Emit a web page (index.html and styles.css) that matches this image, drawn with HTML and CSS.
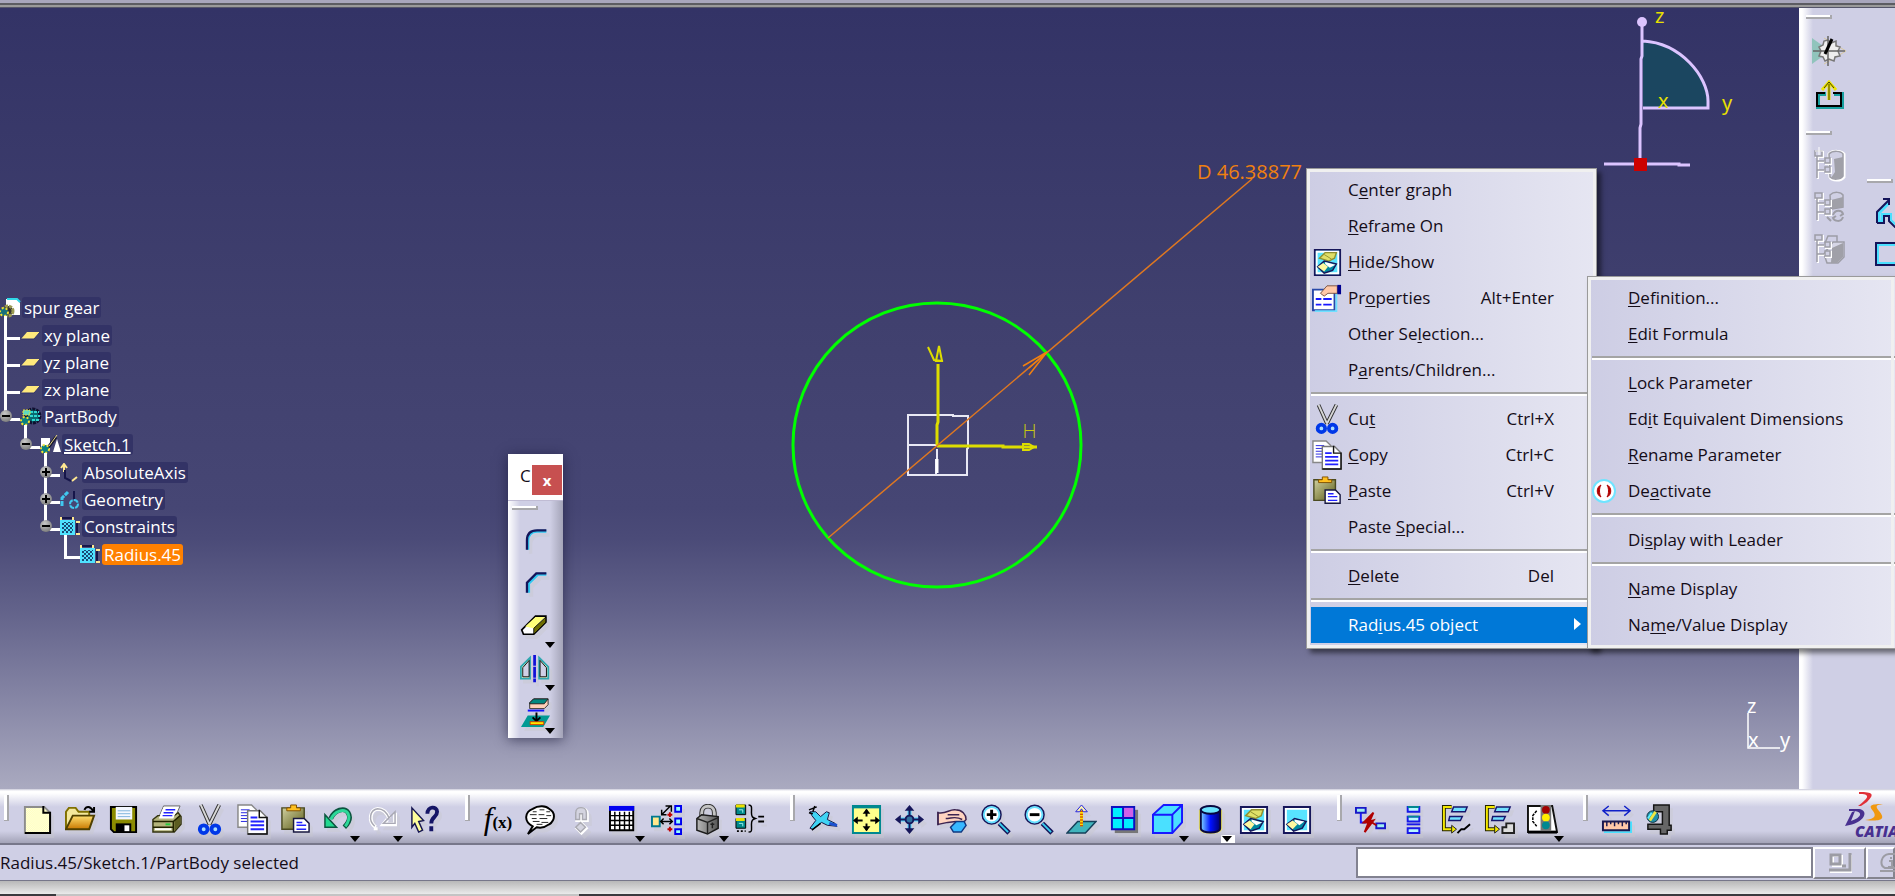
FILE: index.html
```html
<!DOCTYPE html>
<html lang="en">
<head>
<meta charset="utf-8">
<title>CATIA - spur gear</title>
<link rel="stylesheet" href="styles.css">
</head>
<body>
<svg class="defs" aria-hidden="true">
  <defs>
    <pattern id="dots" width="2" height="2" patternUnits="userSpaceOnUse"><rect width="2" height="2" fill="#fff"/><rect width="1" height="1" fill="#ffff99"/><rect x="1" y="1" width="1" height="1" fill="#ffff99"/></pattern>
    <pattern id="check" width="4" height="4" patternUnits="userSpaceOnUse"><rect width="4" height="4" fill="#4fe3ff"/><rect width="2" height="2" fill="#1a4a76"/><rect x="2" y="2" width="2" height="2" fill="#1a4a76"/></pattern>
    <linearGradient id="olive" x1="0" y1="0" x2="1" y2="1"><stop offset="0" stop-color="#d0d0a0"/><stop offset="1" stop-color="#5c5c18"/></linearGradient>
    <linearGradient id="gold" x1="0" y1="0" x2="0" y2="1"><stop offset="0" stop-color="#ffe070"/><stop offset="1" stop-color="#c87800"/></linearGradient>
    <linearGradient id="tube" x1="0" x2="1"><stop offset="0" stop-color="#7fd8ff"/><stop offset=".5" stop-color="#0010ff"/><stop offset="1" stop-color="#000070"/></linearGradient>
    <linearGradient id="steel" x1="0" x2="1"><stop offset="0" stop-color="#b8b8b8"/><stop offset="1" stop-color="#555"/></linearGradient>
    <symbol id="i-new" viewBox="0 0 32 32"><path d="M3 3h20l6 6v21H3z" fill="url(#dots)" stroke="#8c8c8c" stroke-width="2"/><path d="M22 2v7h7v21H3" fill="none" stroke="#000" stroke-width="2"/></symbol>
    <symbol id="i-open" viewBox="0 0 32 32"><path d="M1 26V8l3-4h7l3 4h11v4" fill="#f4e89c" stroke="#807000" stroke-width="2"/><path d="M1 26L8 12h22l-5 14z" fill="url(#gold)" stroke="#504000" stroke-width="2"/><path d="M20 6c2-4 6-4 9 1M30 3v5h-5" fill="none" stroke="#000" stroke-width="2"/></symbol>
    <symbol id="i-save" viewBox="0 0 32 32"><path d="M3 3h26v26H6l-3-3z" fill="#8b8b00" stroke="#000" stroke-width="2"/><path d="M8 3h17v13H8z" fill="#f4f8ff"/><path d="M10 7h13M10 10h13M10 13h13" stroke="#7fb4dc"/><path d="M8 20h16v9H8z" fill="#000"/><path d="M17 22h5v6h-5z" fill="#fff"/></symbol>
    <symbol id="i-print" viewBox="0 0 32 32"><path d="M13 2h17l-6 14H7z" fill="#fff" stroke="#666"/><path d="M15 5h11M13 8h11M12 11h11" stroke="#2222ff" stroke-width="1.500"/><path d="M2 16l5-4h17l4-3 3 4v8l-7 8H2z" fill="#b4b47c" stroke="#333310" stroke-width="1.500"/><path d="M24 17l6-5v9l-6 7z" fill="#5c5c20"/><path d="M2 18h21l7-6M2 24h21M23 18v11" fill="none" stroke="#222200" stroke-width="1.500"/><path d="M4 26h17" stroke="#fff" stroke-width="2"/><path d="M15 21h5" stroke="#28c840" stroke-width="2"/><path d="M8 15L13 3h15l-5 12z" fill="#fff"/><path d="M15 6h10M13 9h10M12 12h10" stroke="#2222ff" stroke-width="1.500"/></symbol>
    <symbol id="i-cut" viewBox="0 0 32 32"><path d="M7 1l9 20M26 1L16 21" stroke="#333" stroke-width="4"/><path d="M7 1l9 20M26 1L16 21" stroke="#d8d8d8" stroke-width="2"/><circle cx="10" cy="26" r="4" fill="#aaddff" stroke="#0038e8" stroke-width="4"/><circle cx="22" cy="26" r="4" fill="#aaddff" stroke="#0038e8" stroke-width="4"/></symbol>
    <symbol id="i-copy" viewBox="0 0 32 32"><path d="M1 1h14l5 5v18H1z" fill="#fff" stroke="#888" stroke-width="1.500"/><path d="M4 6h9M4 9h9M4 12h7M4 15h7M4 18h7" stroke="#2222e0"/><path d="M11 7h13l7 7v17H11z" fill="#fff" stroke="#777" stroke-width="1.500"/><path d="M23 6v8h8v17H11" fill="none" stroke="#111" stroke-width="1.500"/><path d="M14 14h7M14 18h14M14 22h14M14 26h14" stroke="#2222ff" stroke-width="2"/></symbol>
    <symbol id="i-paste" viewBox="0 0 32 32"><path d="M2 4h23v22H2z" fill="url(#olive)" stroke="#4a4a20" stroke-width="1.500"/><path d="M7 7V4h4V1h6v3h4v3z" fill="#ffc020" stroke="#805000"/><path d="M14 15h11l5 5v9H14z" fill="#fff" stroke="#181840" stroke-width="1.500"/><path d="M17 19h6M17 22h10M17 26h10" stroke="#2222ff" stroke-width="1.500"/></symbol>
    <symbol id="i-undo" viewBox="0 0 32 32"><path d="M8 15C12 6 22 3 26 9c3 5 1 10-4 15" fill="none" stroke="#0c5540" stroke-width="5"/><path d="M2 11v13h12z" fill="#22d890" stroke="#0c5540" stroke-width="1.500"/><path d="M8 16C12 7 22 4 26 10c2 5 0 9-3 13" fill="none" stroke="#2cd898" stroke-width="3"/></symbol>
    <symbol id="i-redo" viewBox="0 0 32 32"><path d="M10 24C2 18 4 6 12 5c6 0 10 5 12 10M30 9v12H18l4-5M10 24v3" fill="none" stroke="#fff" stroke-width="4"/><path d="M9 23C2 17 4 6 12 5c6 0 10 5 12 10M30 8v12H18z" fill="none" stroke="#a9a9b4" stroke-width="1.500"/></symbol>
    <symbol id="i-help" viewBox="0 0 32 32"><path d="M3 4l12 13-5 1 4 9-4 2-4-9-3 4z" fill="#ffff9c" stroke="#151550" stroke-width="1.500"/><path d="M19 10c0-8 10-8 10-2 0 6-6 5-6 12M23 23v5" fill="none" stroke="#151566" stroke-width="4"/></symbol>
    <symbol id="i-speech" viewBox="0 0 32 32"><path d="M8 23C-2 18 0 8 8 5 14 1 22 2 25 5c7 4 6 12 0 16-4 3-9 4-13 3l-9 7z" fill="#fff" stroke="#000" stroke-width="2"/><path d="M8 8h4M15 6h5M22 8h4M5 11h7M14 11h6M22 12h5M7 15h5M15 15h8M8 18h7M17 19h7M12 21h6" stroke="#222"/></symbol>
    <symbol id="i-clip" viewBox="0 0 32 32"><path d="M9 16V9c0-7 11-7 11 0v7h-4v-6h-3v6zM14 19l5 5-5 5-5-5z" fill="none" stroke="#fff" stroke-width="3" transform="translate(1 1)"/><path d="M9 16V9c0-7 11-7 11 0v7h-4v-6h-3v6zM14 19l5 5-5 5-5-5z" fill="#d4d4e0" stroke="#aaaab2" stroke-width="1.500"/></symbol>
    <symbol id="i-table" viewBox="0 0 32 32"><path d="M1 3h24v24H1z" fill="#fff" stroke="#000" stroke-width="2"/><path d="M6 8v19M11 8v19M16 8v19M21 8v19M1 12h24M1 17h24M1 22h24" stroke="#000" stroke-width="1.5"/><path d="M0 2h26v5H0z" fill="#0000f0"/></symbol>
    <symbol id="i-rel" viewBox="0 0 32 32"><path d="M1 13h8v10H1z" fill="#ffe88c" stroke="#007890" stroke-width="2"/><path d="M10 18h12M11 11l9-9M15 2h6v6M11 6v5h5M13 15l-3 3 3 3M19 15l3 3-3 3" fill="none" stroke="#000" stroke-width="1.5"/><path d="M17 11h5M19.500 8.500v5M17 26h5M19.500 23.500v5" stroke="#c00000" stroke-width="2"/><path d="M25 2h6v6h-6zM25 15h6v6h-6zM25 26h6v5h-6z" fill="#9ff" stroke="#0000f0" stroke-width="2"/></symbol>
    <symbol id="i-lock" viewBox="0 0 32 32"><path d="M9 18V9c0-9 13-9 13 0v7" fill="none" stroke="#333" stroke-width="5"/><path d="M9 18V9c0-9 13-9 13 0v7" fill="none" stroke="#c4c4c4" stroke-width="3"/><path d="M4 15l5-4 17 2v12l-11 6-11-4z" fill="url(#steel)" stroke="#1a1a1a" stroke-width="1.500"/><path d="M15 19v12M15 19l11-5M4 15l11 4M20 19v6M18 21h4" fill="none" stroke="#222" stroke-width="1.500"/></symbol>
    <symbol id="i-eq" viewBox="0 0 32 32"><path d="M1 1h10v10H1zM1 15h10v10H1z" fill="#008888" stroke="#000"/><path d="M1 2h9M1 16h9" stroke="#e8e000" stroke-width="3"/><path d="M4 6h4v3M4 20h4v3" fill="none" stroke="#9cf0f0"/><path d="M14 1c4 0 3 3 3 8 0 4 1 5 4 6-3 1-4 2-4 6 0 6 1 8-3 8" fill="none" stroke="#000" stroke-width="1.5"/><path d="M24 13h6M24 18h6M2 28h2M6 28h2M10 28h1" stroke="#000" stroke-width="2"/></symbol>
    <symbol id="i-fly" viewBox="0 0 32 32"><path d="M2 8l6 0 5 5 6-5 3 1-2 7 8 4 2 3-10-1-6-3-9 7-3-1 6-8-4-5z" fill="#40d4f4" stroke="#151540"/><path d="M1 6l8-3M5 8l2-6M4 27l9-7M1 9l4 1" stroke="#000" stroke-width="1.500"/><path d="M22 20l8 2" stroke="#1b50d0" stroke-width="3"/></symbol>
    <symbol id="i-fit" viewBox="0 0 32 32"><path d="M2 2h28v28H2z" fill="#ffff8c" stroke="#008890" stroke-width="2"/><path d="M1 3h30" stroke="#008890" stroke-width="3"/><path d="M16 6v7M16 20v7M4 17h8M20 17h8" stroke="#000" stroke-width="2"/><path d="M12 10h8l-4-5zM12 23h8l-4 5zM7 13v8l-5-4zM25 13v8l5-4z"/></symbol>
    <symbol id="i-pan" viewBox="0 0 32 32"><path d="M16 4v24M4 16h24" stroke="#48d4ff" stroke-width="4"/><path d="M16 4v24M4 16h24" stroke="#16165a" stroke-width="2"/><path d="M11 7h10l-5-6zM11 25h10l-5 6zM7 11v10l-6-5zM25 11v10l6-5z" fill="#16165a"/><circle cx="16" cy="16" r="4" fill="#3070a0" stroke="#16165a" stroke-width="2"/></symbol>
    <symbol id="i-rot" viewBox="0 0 32 32"><path d="M1 9c8 2 12-4 18-3 7 0 11 5 11 10l-5 6-6-4-8 1-10 2z" fill="#ffd4c0" stroke="#3c2450" stroke-width="1.500"/><path d="M11 11h12M9 15c6 0 10-3 17 1M1 8v14" fill="none" stroke="#3c2450" stroke-width="1.500"/><path d="M14 24l6-6h8l2 4-5 7h-8z" fill="#38b8ff" stroke="#103880" stroke-width="1.500"/></symbol>
    <symbol id="i-zin" viewBox="0 0 32 32"><path d="M20 20l10 10" stroke="#16165a" stroke-width="5"/><path d="M20 20l9 9" stroke="#38d0f0" stroke-width="2"/><circle cx="12" cy="11" r="9.500" fill="#fff" stroke="#16165a" stroke-width="2"/><circle cx="12" cy="11" r="8" fill="none" stroke="#66e0ff" stroke-width="2"/><path d="M7 11h10M12 6v10" stroke="#000" stroke-width="3"/></symbol>
    <symbol id="i-zout" viewBox="0 0 32 32"><path d="M20 20l10 10" stroke="#16165a" stroke-width="5"/><path d="M20 20l9 9" stroke="#38d0f0" stroke-width="2"/><circle cx="12" cy="11" r="9.500" fill="#fff" stroke="#16165a" stroke-width="2"/><circle cx="12" cy="11" r="8" fill="none" stroke="#66e0ff" stroke-width="2"/><path d="M7 11h10" stroke="#000" stroke-width="3"/></symbol>
    <symbol id="i-normal" viewBox="0 0 32 32"><path d="M12 18h19L20 30H1z" fill="#40b4bc" stroke="#16405a" stroke-width="1.500"/><path d="M16 23V4" stroke="#ffe000" stroke-width="3"/><path d="M16 23V4" stroke="#c02000" stroke-width="3" stroke-dasharray="1 2"/><path d="M16 1l-6 7h4l2-3 2 3h4z" fill="#fff6b0" stroke="#2020e0"/></symbol>
    <symbol id="i-views" viewBox="0 0 32 32"><path d="M6 6h24v24H6z" fill="#777"/><path d="M3 3h23v23H3z" fill="#00f0ff" stroke="#1010c0" stroke-width="2"/><path d="M15 4h10v10H15z" fill="#d060e8"/><path d="M14.500 3v23M3 14.500h23" stroke="#1010c0" stroke-width="2"/></symbol>
    <symbol id="i-cube" viewBox="0 0 32 32"><path d="M1 11L12 1h19v18L21 30H1z" fill="#4ae0ff" stroke="#1818ff" stroke-width="2"/><path d="M1 11h20v19M21 11L31 1" fill="none" stroke="#1818ff" stroke-width="2"/></symbol>
    <symbol id="i-cyl" viewBox="0 0 32 32"><path d="M5 6v20c2 5 20 5 22 0V6" fill="none" stroke="#f0e860" stroke-width="2"/><path d="M6 6v19c0 6 20 6 20 0V6z" fill="url(#tube)" stroke="#080840" stroke-width="2"/><ellipse cx="16" cy="6" rx="10" ry="4" fill="#6ce4ff" stroke="#080840" stroke-width="2"/></symbol>
    <symbol id="i-hide" viewBox="0 0 32 32"><path d="M3 3h27v27H3z" fill="#58e4ff" stroke="#16165a" stroke-width="2"/><path d="M5 5h23v23H5z" fill="none" stroke="#fff" stroke-width="2"/><path d="M8 12l6-6h12l-2 6-6 3z" fill="#e0e068" stroke="#909030" stroke-width="1.500"/><path d="M13 8l8 5" stroke="#909030"/><path d="M6 21l7-6 13 3-4 7-9 3z" fill="#0088a0" stroke="#16165a" stroke-width="1.500"/><path d="M6 21l6-4 5 4-4 5z" fill="#fff8a0"/><path d="M14 16l11 3-6 3-5-4z" fill="#fff"/></symbol>
    <symbol id="i-swap" viewBox="0 0 32 32"><path d="M3 3h27v27H3z" fill="#58e4ff" stroke="#16165a" stroke-width="2"/><path d="M5 5h23v23H5z" fill="none" stroke="#fff" stroke-width="2"/><path d="M6 21l8-6 12 3-4 7-9 3z" fill="#0088a0" stroke="#16165a" stroke-width="1.500"/><path d="M6 21l6-4 5 4-5 5z" fill="#fff8a0"/><path d="M14 16l10 2-5 4-5-4z" fill="#fff"/></symbol>
    <symbol id="i-bolt" viewBox="0 0 32 32"><path d="M6 9v10h5" fill="none" stroke="#1818ff" stroke-width="2"/><path d="M1 4h10v5H1zM22 20h9v5h-9z" fill="#a0f0f0" stroke="#1818c8" stroke-width="2"/><path d="M19 9L9 19h5l-4 10 9-12-4 1z" fill="#b00000" stroke="#b00000" stroke-width="2"/><path d="M16 18l6 4" stroke="#b00000" stroke-width="2"/></symbol>
    <symbol id="i-stack" viewBox="0 0 32 32"><path d="M10 3h12v5H10zM10 13h12v5H10zM10 25h12v5H10z" fill="#b8f8ff" stroke="#1818e8" stroke-width="2"/><path d="M9 21h14" stroke="#1818e8" stroke-width="2"/><path d="M10 3h12M10 13h12" stroke="#008890" stroke-width="2"/></symbol>
    <symbol id="i-tree1" viewBox="0 0 32 32"><path d="M11 3H3v23h10" fill="none" stroke="#222200" stroke-width="4"/><path d="M11 3H3v23h10" fill="none" stroke="#f4e800" stroke-width="2"/><path d="M11 22v8l5-4z" fill="#f4e800" stroke="#222"/><path d="M13 3h14l-2 5H11zM9 13h13l-2 4H8z" fill="#70e0ff" stroke="#16166c" stroke-width="1.500"/><path d="M17 30l4-4h3l6-5" stroke="#000" fill="none" stroke-width="2"/></symbol>
    <symbol id="i-tree2" viewBox="0 0 32 32"><path d="M11 3H3v23h10" fill="none" stroke="#222200" stroke-width="4"/><path d="M11 3H3v23h10" fill="none" stroke="#f4e800" stroke-width="2"/><path d="M11 22v8l5-4z" fill="#f4e800" stroke="#222"/><path d="M13 3h14l-2 5H11zM9 13h13l-2 4H8z" fill="#70e0ff" stroke="#16166c" stroke-width="1.500"/><path d="M19 30v-6h4v-4h8v10z" stroke="#222" fill="#ddd" stroke-width="2"/></symbol>
    <symbol id="i-light" viewBox="0 0 32 32"><path d="M1 2h25l5 27H1z" fill="#fff" stroke="#111" stroke-width="2"/><path d="M1 29h30" stroke="#000" stroke-width="3"/><path d="M14 1h11v27H14z" fill="#777"/><circle cx="19.500" cy="6" r="4" fill="#a00000"/><circle cx="19.500" cy="14" r="4" fill="#ffee00"/><circle cx="19.500" cy="22" r="4" fill="#008890"/><path d="M10 7l-4 5v6l4 5" fill="none" stroke="#000" stroke-width="1.500" stroke-dasharray="3 1"/></symbol>
    <symbol id="i-ruler" viewBox="0 0 32 32"><path d="M2 7h28M8 2L2 7l6 5M24 2l6 5-6 5" fill="none" stroke="#1020c8" stroke-width="1.500"/><path d="M3 29h28V18" fill="none" stroke="#4ae0ff" stroke-width="2"/><path d="M2 18h27v9H2z" fill="#ffc8a8" stroke="#181850" stroke-width="2"/><path d="M6 18v5M10 18v3M14 18v5M18 18v3M22 18v5M26 18v3" stroke="#181850" stroke-width="1.500"/></symbol>
    <symbol id="i-caliper" viewBox="0 0 32 32"><path d="M10 1h16v21h2v5h-4v4h-7v-5H4v-5h15V8h-9z" fill="#666" stroke="#151515" stroke-width="1.500"/><circle cx="9" cy="13" r="6" fill="#2090a8" stroke="#103040"/><path d="M6 17l6-9" stroke="#f0e840" stroke-width="3"/><path d="M4 15l4-6" stroke="#60f0ff" stroke-width="2"/></symbol>
    <symbol id="i-props" viewBox="0 0 32 32"><path d="M1 7h23v22H1z" fill="#fff" stroke="#2848a8" stroke-width="2"/><path d="M26 8v22H3" fill="none" stroke="#70e0ff" stroke-width="2"/><path d="M4 17h6M12 17h9M4 23h6M12 23h9" stroke="#1818ff" stroke-width="2"/><path d="M9 11l7-8h11v8H17l-4 3z" fill="#ffc8a8" stroke="#775040"/><path d="M27 2h4v10h-4z" fill="#000090"/></symbol>
    <symbol id="i-corner" viewBox="-3 -2 40 40"><path d="M7 30V19c0-9 5-13 12-13h12" fill="none" stroke="#30c8f0" stroke-width="4"/><path d="M6 30V18C6 9 11 5 19 5h12" fill="none" stroke="#15155a" stroke-width="3"/></symbol>
    <symbol id="i-chamfer" viewBox="-3 -2 40 40"><path d="M8 30V18L20 6h11" fill="none" stroke="#30c8f0" stroke-width="4"/><path d="M6 30V17L18 5h13" fill="none" stroke="#15155a" stroke-width="3"/></symbol>
    <symbol id="i-eraser" viewBox="0 -2 36 36"><path d="M2 20L18 4h12v7L16 25H4z" fill="#fff" stroke="#000" stroke-width="2"/><path d="M6 16L18 5h11L16 18z" fill="#ffff78"/><path d="M16 18L30 5v6L16 25z" fill="#6c6c00" stroke="#000"/></symbol>
    <symbol id="i-mirror" viewBox="0 0 34 34"><path d="M1 14L11 4v23H1z" fill="#fffccc" stroke="#30a8b0" stroke-width="2"/><path d="M3 15l7-8v18H3z" fill="#d0d0e6" stroke="#000"/><path d="M21 4l10 10v13H21z" fill="#fffccc" stroke="#30a8b0" stroke-width="2"/><path d="M22 7l7 8v10h-7z" fill="#d0d0e6" stroke="#000"/><path d="M16 1v30" stroke="#1010d8" stroke-width="3" stroke-dasharray="12 1"/></symbol>
    <symbol id="i-project" viewBox="0 0 32 32"><path d="M8 19h23l-7 12H1z" fill="#009a94"/><path d="M10 6l4-4h15v6l-4 4H10z" fill="#ffd0b8" stroke="#333"/><path d="M10 6l4-4h15l-4 5H10z" fill="#008880" stroke="#222"/><path d="M8 14h17" stroke="#1010ff" stroke-width="2"/><path d="M17 16v8M13 21l4 4 4-4" fill="none" stroke="#000" stroke-width="2"/><path d="M10 27h15" stroke="#d04000" stroke-width="4"/><path d="M11 27h13" stroke="#ffe800" stroke-width="2"/></symbol>
    <symbol id="i-sketcher" viewBox="0 0 36 32"><path d="M0 3l18 13L0 29z" fill="#90c4bc"/><path d="M12 3l22 13-22 13" fill="none" stroke="#d8c8a0"/><path d="M16 5l3 3 5-2v5l4 1-2 4 2 5-5 1-1 4-5-2-4 2-2-4-4-1 2-5-2-4 4-2 1-4z" fill="#eee" stroke="#777" stroke-width="1.500"/><path d="M16 1v30M1 16h32" stroke="#666" stroke-width="1.500"/><path d="M13 19l7-15" stroke="#000" stroke-width="3"/></symbol>
    <symbol id="i-exit" viewBox="0 0 36 32"><path d="M14 14H6v13h24V14h-8" fill="none" stroke="#18a0a0" stroke-width="4"/><path d="M13 13H5v13h24V13h-8" fill="none" stroke="#000" stroke-width="2"/><path d="M17 20V4M10 10l7-8 7 8" fill="none" stroke="#ece400" stroke-width="3"/><path d="M17 20V4M12 8l5-6 5 6" fill="none" stroke="#443c00" stroke-width="1"/></symbol>
    <symbol id="g-list" viewBox="0 0 36 36"><path d="M3 4h7v5H3zM13 11h5v5h-5zM13 20h5v5h-5zM5 9v22M5 14h7M5 23h7" fill="none" stroke="#fff" stroke-width="2" transform="translate(1 1)"/><path d="M3 4h7v5H3zM13 11h5v5h-5zM13 20h5v5h-5zM5 9v22M5 14h7M5 23h7" fill="#d0d0e4" stroke="#9d9da6" stroke-width="1.500"/></symbol>
    <symbol id="i-d1" viewBox="0 0 36 36"><path d="M17 7c4-4 13-3 15 0v23c-3 4-12 4-14 0z" fill="#d0d0e4" stroke="#fff" stroke-width="3"/><path d="M17 7c4-4 12-3 14 0v22c-3 4-10 4-13 1z" fill="#d0d0e4" stroke="#9d9da6" stroke-width="1.500"/><path d="M22 12l9-2v19c-2 3-8 4-12 2l4-6z" fill="#a0a0a8"/><use href="#g-list" width="36" height="36"/><path d="M7 0v8M3 4h8" stroke="#fff"/></symbol>
    <symbol id="i-d2" viewBox="0 0 36 36"><path d="M18 6c4-4 11-3 13 0v12l-12 2z" fill="#d0d0e4" stroke="#9d9da6" stroke-width="1.500"/><path d="M19 11l12-3v10l-11 2z" fill="#a0a0a8"/><use href="#g-list" width="36" height="36"/><path d="M21 26c2-6 9-5 10-1l-3 2M31 28c-2 6-9 4-10 1l3-2M15 28l4 4" fill="none" stroke="#9d9da6" stroke-width="2"/></symbol>
    <symbol id="i-d3" viewBox="0 0 36 36"><path d="M17 16l4-5h11v15l-6 6H15l-3-9z" fill="#d6d6e6" stroke="#9d9da6" stroke-width="1.500"/><path d="M20 17l11-5v14l-6 6h-6z" fill="#a0a0a8"/><use href="#g-list" width="36" height="36"/><path d="M13 12l3-7h9v6" fill="none" stroke="#9d9da6" stroke-width="1.500"/></symbol>
    <symbol id="i-profile" viewBox="0 0 36 32"><path d="M4 25V16L14 6" fill="none" stroke="#4ae0ff" stroke-width="3"/><path d="M2 26V15L14 3M8 2h6v6M2 26h7v-7h5v5l6 6h8V12" fill="none" stroke="#15155a" stroke-width="2"/><path d="M4 24h3v-7h9v6l5 5" fill="none" stroke="#4ae0ff" stroke-width="2"/></symbol>
    <symbol id="i-rect" viewBox="0 0 36 32"><path d="M1 4h34v22H1z" fill="#d0d0e6" stroke="#15155a" stroke-width="2"/><path d="M3 6h31v18H3z" fill="none" stroke="#4ae0ff" stroke-width="2"/></symbol>
    <symbol id="i-off" viewBox="0 0 24 24"><circle cx="12" cy="12" r="11" fill="#fff" stroke="#70e4ff" stroke-width="2"/><path d="M9 6c-5 2-5 10 0 12-2-3-2-9 0-12zM15 6c5 2 5 10 0 12 2-3 2-9 0-12z" fill="#b00000" stroke="#b00000" stroke-width="1"/></symbol>
    <symbol id="t-part" viewBox="0 0 22 20"><path d="M6 1h11l3 4v12H6z" fill="#fff"/><path d="M7 1h10l3 3" fill="none" stroke="#30d8e8" stroke-width="2"/><circle cx="8" cy="13" r="5" fill="#333" stroke="#9a9a50" stroke-width="3" stroke-dasharray="3 1"/><circle cx="4" cy="14" r="4" fill="#18707c" stroke="#f0e030" stroke-width="2" stroke-dasharray="2 2"/></symbol>
    <symbol id="t-plane" viewBox="0 0 22 20"><path d="M7 6h13l-6 7H1z" fill="#ffe97c"/><path d="M1 13h13l6-7" fill="none" stroke="#30306a" stroke-width="1"/></symbol>
    <symbol id="t-body" viewBox="0 0 22 20"><circle cx="13" cy="9" r="7" fill="#0a6a70" stroke="#101030" stroke-width="3" stroke-dasharray="3 1"/><path d="M10 5h9M10 9h10M12 13h8" stroke="#30d8d0" stroke-width="2" stroke-dasharray="3 1"/><circle cx="5" cy="14" r="4" fill="#0a8080" stroke="#f0e030" stroke-width="2" stroke-dasharray="2 2"/><path d="M3 3h7v5H3z" fill="#60d8c0" stroke="#f0e030" stroke-dasharray="2 1"/></symbol>
    <symbol id="t-sketch" viewBox="0 0 22 20"><path d="M1 3h9v12H1zM13 17l4-13 4 13z" fill="#fff"/><path d="M7 14l9-12" stroke="#181830" stroke-width="3"/><path d="M9 11l8-11" stroke="#e8d880" stroke-width="1"/><circle cx="5" cy="14" r="4" fill="#0a8080" stroke="#f0e030" stroke-width="2" stroke-dasharray="2 2"/></symbol>
    <symbol id="t-axis" viewBox="0 0 22 20"><path d="M4 9V2M1 5l3-4 3 4M12 18l5-4" fill="none" stroke="#ffe890" stroke-width="2"/><path d="M5 7v8l6 3" fill="none" stroke="#16164a" stroke-width="2"/></symbol>
    <symbol id="t-geo" viewBox="0 0 22 20"><path d="M2 16V8l6-6" fill="none" stroke="#40c8f0" stroke-width="3" stroke-dasharray="5 1"/><path d="M14 1v9" stroke="#16164a" stroke-width="2"/><circle cx="14" cy="14" r="4" fill="none" stroke="#40c8f0" stroke-width="2" stroke-dasharray="5 1"/></symbol>
    <symbol id="t-con" viewBox="0 0 22 20"><path d="M1 4h13v13H1z" fill="url(#check)" stroke="#4fe3ff" stroke-width="2"/><path d="M1 1h13M17 4v13" stroke="#16164a" stroke-width="2"/><path d="M1 0v3M13 0v3M16 5h4M16 17h4" stroke="#ffe890" stroke-width="2"/></symbol>
    <symbol id="b-win" viewBox="0 0 24 20"><path d="M4 2h9v10H4zM1 18h22V1" fill="none" stroke="#fff" stroke-width="2" transform="translate(1 1)"/><path d="M3 2h9v9H3zM1 17h21V0M14 13h4" fill="none" stroke="#9c9ca4" stroke-width="3"/></symbol>
    <symbol id="b-info" viewBox="0 0 24 20"><path d="M6 15C0 12 2 2 10 1h8c8 2 8 12 0 14zM1 18h22" fill="none" stroke="#9c9ca4" stroke-width="2"/><path d="M12 4v2M10 8h3v6M9 14h6" fill="none" stroke="#9c9ca4" stroke-width="2"/></symbol>
  </defs>
</svg>

<div class="app">
  <div class="window-edge"></div>

  <main class="workspace">
    <section class="viewport">
      <svg class="scene" viewBox="0 8 1799 781">
        <g fill="none" stroke="#e8e8f4" stroke-width="2">
          <path d="M908 415h45v1h15v32l-1 1v26h-59zM908 445h29M937 449v10M936 459v16"/>
        </g>
        <path d="M937 459v14" stroke="#fff" stroke-width="3"/>
        <ellipse cx="937" cy="445" rx="144" ry="142" fill="none" stroke="#00ff00" stroke-width="3"/>
        <g fill="none" stroke="#dddd00" stroke-width="3">
          <path d="M937 445v-20l1-3v-58M937 446h66v1h34"/>
          <path d="M936 361l3-15 3 15zM1023 444h6l5 3-5 3h-6z" stroke-width="2"/>
          <path d="M928 347l6 13 9 1" stroke-width="2"/>
        </g>
        <path d="M828 538L1252 179" stroke="#e07820" stroke-width="1.500"/>
        <path d="M1023 366l24-14-18 23M1047 352l-18 16" fill="none" stroke="#f08010" stroke-width="1.500"/>
        <text class="dim" x="1197" y="179">D 46.38877</text>
        <text class="axis-label" x="1022" y="438">H</text>
      </svg>

      <svg class="compass" viewBox="1600 8 199 170">
        <path d="M1643 41c38 2 65 36 65 60v7h-65z" fill="#1b4660"/>
        <path d="M1642 22v34l-1 3v65l-1 4v32M1643 41c38 2 65 36 65 60v7h-65M1604 164h75v1h11" fill="none" stroke="#dcc4ff" stroke-width="3"/>
        <circle cx="1642" cy="22" r="5" fill="#dcc4ff"/>
        <path d="M1634 158h13v13h-13z" fill="#cc0000"/>
        <text x="1655" y="23">z</text><text x="1658" y="108">x</text><text x="1722" y="110">y</text>
      </svg>

      <svg class="triad" viewBox="1740 690 60 70">
        <path d="M1749 712v35h32" fill="none" stroke="#fff" stroke-width="1.500"/>
        <text x="1748" y="712">z</text><text x="1749" y="746">x</text><text x="1781" y="746">y</text>
      </svg>

      <nav class="tree" aria-label="Specification tree">
        <div class="row"><svg><use href="#t-part"/></svg><span>spur gear</span></div>
        <ul>
          <li><div class="row"><svg><use href="#t-plane"/></svg><span>xy plane</span></div></li>
          <li><div class="row"><svg><use href="#t-plane"/></svg><span>yz plane</span></div></li>
          <li><div class="row"><svg><use href="#t-plane"/></svg><span>zx plane</span></div></li>
          <li><button class="toggle" aria-label="Collapse PartBody"></button><div class="row"><svg><use href="#t-body"/></svg><span>PartBody</span></div>
            <ul>
              <li><button class="toggle" aria-label="Collapse Sketch.1"></button><div class="row"><svg><use href="#t-sketch"/></svg><span class="active">Sketch.1</span></div>
                <ul>
                  <li><button class="toggle plus" aria-label="Expand AbsoluteAxis"></button><div class="row"><svg><use href="#t-axis"/></svg><span>AbsoluteAxis</span></div></li>
                  <li><button class="toggle plus" aria-label="Expand Geometry"></button><div class="row"><svg><use href="#t-geo"/></svg><span>Geometry</span></div></li>
                  <li><button class="toggle" aria-label="Collapse Constraints"></button><div class="row"><svg><use href="#t-con"/></svg><span>Constraints</span></div>
                    <ul><li><div class="row"><svg><use href="#t-con"/></svg><span class="selected">Radius.45</span></div></li></ul>
                  </li>
                </ul>
              </li>
            </ul>
          </li>
        </ul>
      </nav>

      <div class="palette">
        <div class="palette-title"><span>C</span><button class="close" aria-label="Close">x</button></div>
        <div class="palette-body">
          <i class="grip-h"></i>
          <button class="tool" aria-label="Corner"><svg><use href="#i-corner"/></svg></button>
          <button class="tool" aria-label="Chamfer"><svg><use href="#i-chamfer"/></svg></button>
          <button class="tool more" aria-label="Trim"><svg><use href="#i-eraser"/></svg></button>
          <button class="tool more" aria-label="Mirror"><svg><use href="#i-mirror"/></svg></button>
          <button class="tool more" aria-label="Project"><svg><use href="#i-project"/></svg></button>
        </div>
      </div>
    </section>

    <aside class="side">
      <div class="side-col">
        <i class="grip-h"></i>
        <button aria-label="Sketcher"><svg><use href="#i-sketcher"/></svg></button>
        <button aria-label="Exit workbench"><svg><use href="#i-exit"/></svg></button>
        <i class="grip-h"></i>
        <button class="tall" aria-label="Insert body" disabled><svg><use href="#i-d1"/></svg></button>
        <button class="tall" aria-label="Update" disabled><svg><use href="#i-d2"/></svg></button>
        <button class="tall" aria-label="Boolean" disabled><svg><use href="#i-d3"/></svg></button>
      </div>
      <div class="side-col second">
        <i class="grip-h"></i>
        <button aria-label="Profile"><svg><use href="#i-profile"/></svg></button>
        <button aria-label="Rectangle"><svg><use href="#i-rect"/></svg></button>
      </div>
    </aside>
  </main>

  <div class="toolbar" role="toolbar">
    <i class="grip"></i>
    <div class="group">
      <button class="tool" aria-label="New"><svg><use href="#i-new"/></svg></button>
      <button class="tool" aria-label="Open"><svg><use href="#i-open"/></svg></button>
      <button class="tool" aria-label="Save"><svg><use href="#i-save"/></svg></button>
      <button class="tool" aria-label="Print"><svg><use href="#i-print"/></svg></button>
      <button class="tool" aria-label="Cut"><svg><use href="#i-cut"/></svg></button>
      <button class="tool" aria-label="Copy"><svg><use href="#i-copy"/></svg></button>
      <button class="tool" aria-label="Paste"><svg><use href="#i-paste"/></svg></button>
      <button class="tool more" aria-label="Undo"><svg><use href="#i-undo"/></svg></button>
      <button class="tool more" aria-label="Redo"><svg><use href="#i-redo"/></svg></button>
      <button class="tool" aria-label="What's this"><svg><use href="#i-help"/></svg></button>
    </div>
    <i class="grip"></i>
    <div class="group narrow">
      <button class="tool formula" aria-label="Formula"><em>f</em><b>(x)</b></button>
      <button class="tool" aria-label="Comment"><svg><use href="#i-speech"/></svg></button>
      <button class="tool" aria-label="Check"><svg><use href="#i-clip"/></svg></button>
      <button class="tool more" aria-label="Design table"><svg><use href="#i-table"/></svg></button>
      <button class="tool" aria-label="Relations"><svg><use href="#i-rel"/></svg></button>
      <button class="tool more" aria-label="Lock"><svg><use href="#i-lock"/></svg></button>
      <button class="tool" aria-label="Equivalent dimensions"><svg><use href="#i-eq"/></svg></button>
    </div>
    <i class="grip"></i>
    <div class="group">
      <button class="tool" aria-label="Fly"><svg><use href="#i-fly"/></svg></button>
      <button class="tool" aria-label="Fit all in"><svg><use href="#i-fit"/></svg></button>
      <button class="tool" aria-label="Pan"><svg><use href="#i-pan"/></svg></button>
      <button class="tool" aria-label="Rotate"><svg><use href="#i-rot"/></svg></button>
      <button class="tool" aria-label="Zoom in"><svg><use href="#i-zin"/></svg></button>
      <button class="tool" aria-label="Zoom out"><svg><use href="#i-zout"/></svg></button>
      <button class="tool" aria-label="Normal view"><svg><use href="#i-normal"/></svg></button>
      <button class="tool" aria-label="Multi-view"><svg><use href="#i-views"/></svg></button>
      <button class="tool more" aria-label="Isometric view"><svg><use href="#i-cube"/></svg></button>
      <button class="tool more lit" aria-label="Shading"><svg><use href="#i-cyl"/></svg></button>
      <button class="tool" aria-label="Hide or show"><svg><use href="#i-hide"/></svg></button>
      <button class="tool" aria-label="Swap visible space"><svg><use href="#i-swap"/></svg></button>
    </div>
    <i class="grip"></i>
    <div class="group">
      <button class="tool" aria-label="Knowledge inspector"><svg><use href="#i-bolt"/></svg></button>
      <button class="tool" aria-label="Set"><svg><use href="#i-stack"/></svg></button>
      <button class="tool" aria-label="Rule"><svg><use href="#i-tree1"/></svg></button>
      <button class="tool" aria-label="Reaction"><svg><use href="#i-tree2"/></svg></button>
      <button class="tool more" aria-label="Check analysis"><svg><use href="#i-light"/></svg></button>
    </div>
    <i class="grip"></i>
    <div class="group">
      <button class="tool" aria-label="Measure between"><svg><use href="#i-ruler"/></svg></button>
      <button class="tool" aria-label="Measure item"><svg><use href="#i-caliper"/></svg></button>
    </div>
    <div class="logo">
      <svg viewBox="0 0 52 34"><path d="M14 0c14 0 16 2 8 10l-6 4h-3c12-9 12-12 1-12z" fill="#e03038"/><path d="M4 17h10c10 1 7 14-14 17l7-14 3-1-4 10c12-4 13-11-2-10z" fill="#483090"/><path d="M38 12c-14 0-14 2-10 7 3 4 3 8-8 9 19 2 20-2 14-9-4-5-3-6 4-7z" fill="#f09810"/></svg>
      <span>CATIA</span>
    </div>
  </div>

  <footer class="status">
    <label for="power">Radius.45/Sketch.1/PartBody selected</label>
    <input id="power" type="text">
    <button aria-label="Power input"><svg><use href="#b-win"/></svg></button>
    <button aria-label="Information"><svg><use href="#b-info"/></svg></button>
  </footer>
  <div class="desktop"></div>
</div>

<div class="menu context" role="menu">
  <button role="menuitem"><span>C<u>e</u>nter graph</span></button>
  <button role="menuitem"><span><u>R</u>eframe On</span></button>
  <button role="menuitem"><svg><use href="#i-hide"/></svg><span><u>H</u>ide/Show</span></button>
  <button role="menuitem"><svg><use href="#i-props"/></svg><span>Pr<u>o</u>perties</span><kbd>Alt+Enter</kbd></button>
  <button role="menuitem"><span>Other Se<u>l</u>ection...</span></button>
  <button role="menuitem"><span>P<u>a</u>rents/Children...</span></button>
  <hr>
  <button role="menuitem"><svg><use href="#i-cut"/></svg><span>Cu<u>t</u></span><kbd>Ctrl+X</kbd></button>
  <button role="menuitem"><svg><use href="#i-copy"/></svg><span><u>C</u>opy</span><kbd>Ctrl+C</kbd></button>
  <button role="menuitem"><svg><use href="#i-paste"/></svg><span><u>P</u>aste</span><kbd>Ctrl+V</kbd></button>
  <button role="menuitem"><span>Paste <u>S</u>pecial...</span></button>
  <hr>
  <button role="menuitem"><span><u>D</u>elete</span><kbd>Del</kbd></button>
  <hr>
  <button role="menuitem" class="current"><span>Rad<u>i</u>us.45 object</span></button>
</div>

<div class="menu sub" role="menu">
  <button role="menuitem"><span><u>D</u>efinition...</span></button>
  <button role="menuitem"><span><u>E</u>dit Formula</span></button>
  <hr>
  <button role="menuitem"><span><u>L</u>ock Parameter</span></button>
  <button role="menuitem"><span>Ed<u>i</u>t Equivalent Dimensions</span></button>
  <button role="menuitem"><span><u>R</u>ename Parameter</span></button>
  <button role="menuitem"><svg class="small"><use href="#i-off"/></svg><span>De<u>a</u>ctivate</span></button>
  <hr>
  <button role="menuitem"><span>Di<u>s</u>play with Leader</span></button>
  <hr>
  <button role="menuitem"><span><u>N</u>ame Display</span></button>
  <button role="menuitem"><span>Na<u>m</u>e/Value Display</span></button>
</div>
</body>
</html>
```
FILE: styles.css
```css
* { box-sizing: border-box; }
body { margin: 0; overflow: hidden; font-family: "Open Sans", "Noto Sans", sans-serif; font-size: 17px; color: #140c18; }
button { border: 0; padding: 0; background: none; font: inherit; color: inherit; }
svg { display: block; flex: none; }
.defs { position: absolute; width: 0; height: 0; }

.app { display: flex; flex-direction: column; height: 100vh; background: #cfcfe5; }
.window-edge { height: 8px; background: linear-gradient(#a8a6bc 0 3px, #5c5c62 3px 5px, #9a9a9a 5px 7px, #55556a 7px); }

/* Workspace */
.workspace { flex: 1; display: flex; min-height: 0; }
.viewport {
  position: relative; flex: 1; min-width: 0;
  background: linear-gradient(#333366 0%, #40406e 40%, #464674 64%, #4b4b78 68%, #62628a 77%, #8484a4 88%, #aaaac0 100%);
}
.scene { width: 100%; height: 100%; }
.dim { font: 400 20px "Open Sans", sans-serif; fill: #f08010; }
.axis-label { font: 300 20px "DejaVu Sans", sans-serif; fill: #c8c810; }
.compass { position: absolute; top: 0; right: 0; width: 199px; height: 170px; overflow: visible; }
.compass text { font: 20px "Noto Sans", sans-serif; fill: #e8e000; }
.triad { position: absolute; right: 0; bottom: 28px; width: 60px; height: 70px; overflow: visible; }
.triad text { font: 20px "Noto Sans", sans-serif; fill: #fff; }

/* Specification tree */
.tree { position: absolute; left: 0; top: 286px; font: 17px "Open Sans", "Noto Sans", sans-serif; color: #fff; }
.tree ul { list-style: none; margin: 0; padding: 1px 0 0; }
.tree li { position: relative; padding-left: 20px; }
.tree .row { display: flex; align-items: center; height: 27px; }
.tree .row svg { position: relative; width: 22px; height: 20px; }
.tree .row span { padding: 0 2px; line-height: 21px; background: #333366; border-radius: 3px; white-space: nowrap; }
.tree .row .active { text-decoration: underline; text-decoration-thickness: 2px; }
.tree .row .selected { background: #ff8000; }
.tree li::before { content: ""; position: absolute; left: 4px; top: -6px; width: 13px; height: 21px; border: solid #fff; border-width: 0 0 3px 3px; }
.tree li:not(:last-child)::after { content: ""; position: absolute; left: 4px; top: 0; bottom: 0; width: 3px; background: #fff; }
.toggle { position: absolute; z-index: 1; left: 0; top: 7px; width: 12px; height: 12px; border-radius: 50%; background: linear-gradient(#000, #000) center / 8px 2px no-repeat, radial-gradient(circle at 40% 30%, #c8c8c8, #666); }
.toggle.plus { background: linear-gradient(#000, #000) center / 8px 2px no-repeat, linear-gradient(#000, #000) center / 2px 8px no-repeat, radial-gradient(circle at 40% 30%, #c8c8c8, #666); }

/* Floating palette */
.palette { position: absolute; left: 508px; top: 446px; width: 55px; box-shadow: 0 2px 12px rgba(20, 20, 50, .6); }
.palette-title { display: flex; align-items: center; justify-content: flex-end; height: 46px; padding: 6px 1px 0 0; background: #fff; }
.palette-title span { width: 12px; overflow: hidden; line-height: 24px; margin-top: -8px; font-size: 17px; }
.close { width: 30px; height: 30px; background: #c75050; color: #fff; font-weight: 700; font-size: 15px; line-height: 28px; }
.palette-body { display: flex; flex-direction: column; padding: 5px 4px 4px; border-top: 1px solid #c0bcd4; background: linear-gradient(90deg, #fff, #cfcfe5 12px, #cfcfe5 42px, #a4a4b8); }
.palette-body .grip-h { margin-bottom: 9px; }
.palette-body .tool { height: 43px; }
.palette-body .tool svg { margin: 0 0 0 4px; }
.palette-body .tool::after { right: -3px; bottom: 0; }

.grip-h { display: block; width: 26px; height: 4px; background: #fff; border: solid #a8a8ac; border-width: 0 2px 2px 0; }
.grip { width: 5px; height: 26px; margin-bottom: 17px; background: #fff; border: solid #a8a8ac; border-width: 0 2px 1px 0; }

/* Side toolbars */
.side { display: flex; width: 96px; background: linear-gradient(90deg, #fff 0 3px, #cfcfe5 14px); }
.side-col { display: flex; flex-direction: column; width: 61px; padding: 7px 0 0 7px; }
.side-col.second { width: 35px; padding: 171px 0 0 7px; overflow: hidden; }
.side-col button { height: 45px; padding-left: 6px; }
.side-col .tall { height: 42px; }
.side-col .grip-h { margin-bottom: 9px; }
.side-col button + .grip-h { margin: 13px 0 9px; }
.side-col svg { width: 36px; height: 32px; }
.side-col .tall svg { height: 36px; }
.side-col.second button { height: 42px; padding-left: 8px; }

/* Main toolbar */
.toolbar { display: flex; align-items: center; height: 56px; padding-left: 4px; overflow: hidden; border-bottom: 2px solid #77778a; background: linear-gradient(#c8c8d8 0, #fff 2px, #fff 4px, #cfcfe5 18px, #cfcfe5 42px, #9c9cb0 56px); }
.group { display: flex; margin: 0 19px 0 7px; padding-top: 7px; height: 100%; }
.tool { position: relative; display: flex; align-items: center; justify-content: center; width: 43px; height: 46px; }
.narrow .tool { width: 42px; }
.tool svg { width: 31px; height: 31px; filter: drop-shadow(3px 4px 0 rgba(200, 200, 205, .4)); }
.tool.more::after { content: ""; position: absolute; right: 0; bottom: 0; border: solid transparent; border-width: 6px 5px 0; border-top-color: #000; }
.tool.lit::before { content: ""; position: absolute; right: -3px; bottom: -2px; width: 14px; height: 9px; background: #fff; }
.formula { font-family: "Liberation Serif", serif; align-items: center; color: #000; }
.formula em { font-size: 31px; line-height: 30px; }
.formula b { font-size: 17px; line-height: 30px; padding-top: 8px; }
.logo { flex: none; margin: 0 -32px 4px auto; width: 82px; color: #483090; }
.logo svg { width: 52px; height: 34px; }
.logo span { display: block; padding-left: 10px; font-size: 15px; font-weight: 800; font-style: italic; line-height: 10px; }
.toolbar .group:nth-last-child(2) { margin-right: 0; }

/* Status bar */
.status { display: flex; align-items: center; height: 36px; border-bottom: 1px solid #77778a; overflow: hidden; }
.status label { flex: 1; white-space: nowrap; }
.status input { width: 457px; height: 31px; border: 2px solid #828290; background: #fff; }
.status button { flex: none; display: flex; align-items: center; width: 53px; height: 32px; padding-left: 13px; border: solid; border-width: 2px; border-color: #fff #84848e #84848e #fff; background: #cfcfe5; }
.status button:last-child { width: 29px; padding-left: 11px; }
.status button svg { width: 24px; height: 20px; }
.desktop { height: 15px; background: linear-gradient(90deg, #3a3a3e 56px, #c4c4c4 56px 579px, #3a3a3e 579px) bottom / 100% 2px no-repeat, linear-gradient(#b8b8b8, #f2f2f2); }

/* Menus */
.menu { position: absolute; border: 1px solid #9a9a9a; outline: 3px solid #f0f0f0; outline-offset: -4px; padding: 3px 4px 5px; background: linear-gradient(90deg, #cdcde4, #e6e6f2); box-shadow: 4px 4px 5px rgba(0, 0, 0, .5); }
.menu button { display: flex; align-items: center; position: relative; width: 100%; height: 36px; padding: 0 0 2px 37px; text-align: left; white-space: nowrap; }
.menu button svg { position: absolute; left: 1px; top: 3px; width: 30px; height: 30px; }
.menu button .small { left: 0; top: 6px; width: 24px; height: 24px; }
.menu u { text-underline-offset: 2px; }
.menu kbd { margin-left: auto; padding-right: 38px; font: inherit; }
.menu hr { height: 4px; margin: 4px 0 5px; border: solid; border-width: 2px 0; border-color: #a4a4a4 transparent #fff; }
.menu .current { background: #0078d7; color: #fff; }
.menu .current::after { content: ""; position: absolute; right: 11px; border: solid transparent; border-width: 6px 0 6px 7px; border-left-color: #fff; }
.context { left: 1306px; top: 168px; width: 291px; }
.sub { left: 1587px; right: 0; top: 276px; border-right: 0; padding-right: 0; }
.sub button { padding-left: 36px; }
```
